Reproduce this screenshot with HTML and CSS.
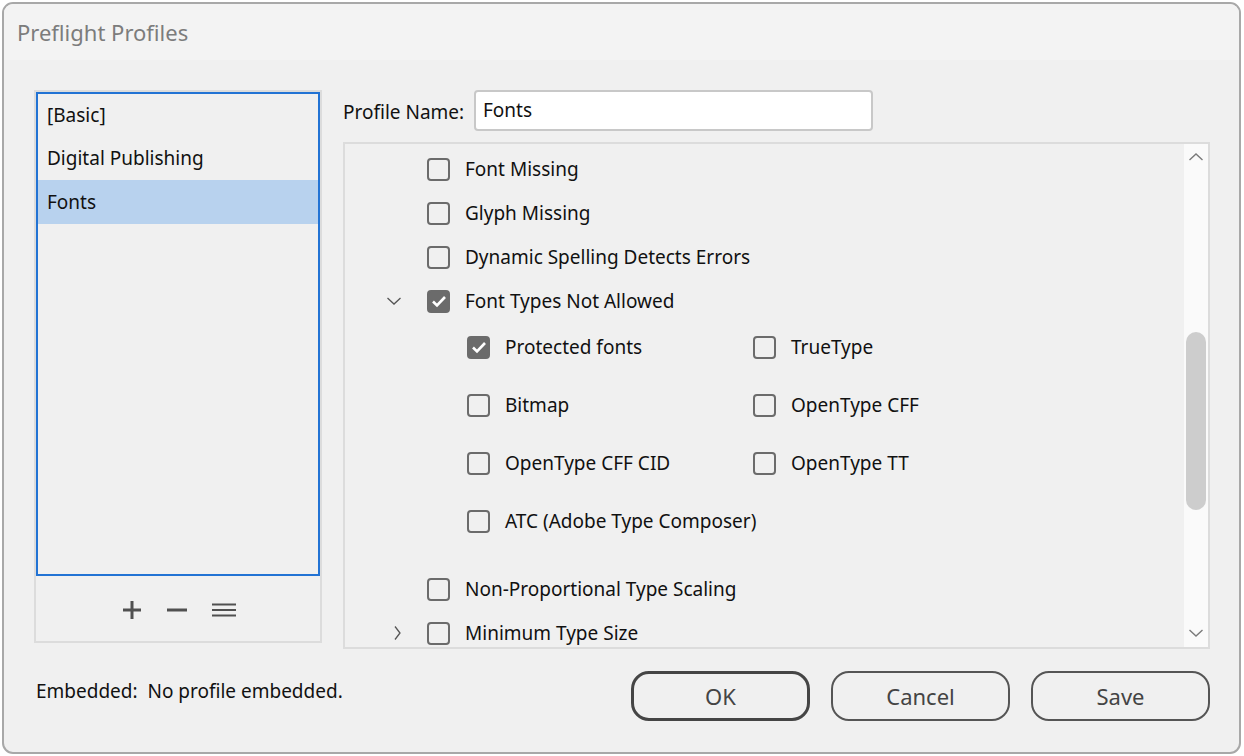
FILE: index.html
```html
<!DOCTYPE html>
<html>
<head>
<meta charset="utf-8">
<link rel="stylesheet" href="styles.css">
</head>
<body>
<div class="window">
  <div class="titlebar">Preflight Profiles</div>
  <div class="content">
    <div class="left">
      <div class="list">
        <div class="item">[Basic]</div>
        <div class="item">Digital Publishing</div>
        <div class="item selected">Fonts</div>
      </div>
      <div class="toolbar">
        <svg class="tool" width="22" height="22" viewBox="0 0 22 22"><path d="M11 2v18M2 11h18" stroke="#505050" stroke-width="3"/></svg>
        <svg class="tool" width="22" height="22" viewBox="0 0 22 22"><path d="M1 11h20" stroke="#505050" stroke-width="3"/></svg>
        <svg class="tool" width="26" height="22" viewBox="0 0 26 22"><path d="M1 5.5h24M1 11h24M1 16.5h24" stroke="#505050" stroke-width="1.8"/></svg>
      </div>
    </div>
    <div class="right">
      <div class="namerow">
        <span class="namelabel">Profile Name:</span>
        <div class="nameinput">Fonts</div>
      </div>
      <div class="panel">
        <div class="tree">
          <div class="row"><span class="twisty"></span><span class="cb"></span><span class="lbl">Font Missing</span></div>
          <div class="row"><span class="twisty"></span><span class="cb"></span><span class="lbl">Glyph Missing</span></div>
          <div class="row"><span class="twisty"></span><span class="cb"></span><span class="lbl">Dynamic Spelling Detects Errors</span></div>
          <div class="row"><span class="twisty"><svg width="16" height="10" viewBox="0 0 16 10"><path d="M1.5 2l6.5 6 6.5-6" fill="none" stroke="#555" stroke-width="1.3"/></svg></span><span class="cb checked"><svg width="18" height="18" viewBox="0 0 18 18"><path d="M3 9.5l4 4L15 5" fill="none" stroke="#fff" stroke-width="2.6"/></svg></span><span class="lbl">Font Types Not Allowed</span></div>
          <div class="subgrid">
            <div class="sub"><span class="cb checked"><svg width="18" height="18" viewBox="0 0 18 18"><path d="M3 9.5l4 4L15 5" fill="none" stroke="#fff" stroke-width="2.6"/></svg></span><span class="lbl">Protected fonts</span></div>
            <div class="sub"><span class="cb"></span><span class="lbl">TrueType</span></div>
            <div class="sub"><span class="cb"></span><span class="lbl">Bitmap</span></div>
            <div class="sub"><span class="cb"></span><span class="lbl">OpenType CFF</span></div>
            <div class="sub"><span class="cb"></span><span class="lbl">OpenType CFF CID</span></div>
            <div class="sub"><span class="cb"></span><span class="lbl">OpenType TT</span></div>
            <div class="sub"><span class="cb"></span><span class="lbl">ATC (Adobe Type Composer)</span></div>
          </div>
          <div class="row gap"><span class="twisty"></span><span class="cb"></span><span class="lbl">Non-Proportional Type Scaling</span></div>
          <div class="row"><span class="twisty"><svg width="10" height="16" viewBox="0 0 10 16"><path d="M3 1.5l5 6.5-5 6.5" fill="none" stroke="#555" stroke-width="1.3"/></svg></span><span class="cb"></span><span class="lbl">Minimum Type Size</span></div>
        </div>
        <div class="scrollbar">
          <svg class="arrow" width="16" height="10" viewBox="0 0 16 10"><path d="M1.5 8l6.5-6 6.5 6" fill="none" stroke="#7a7a7a" stroke-width="1.4"/></svg>
          <div class="track"><div class="thumb"></div></div>
          <svg class="arrow" width="16" height="10" viewBox="0 0 16 10"><path d="M1.5 2l6.5 6 6.5-6" fill="none" stroke="#7a7a7a" stroke-width="1.4"/></svg>
        </div>
      </div>
    </div>
  </div>
  <div class="footer">
    <div class="embedded">Embedded:&nbsp;&nbsp;No profile embedded.</div>
    <div class="buttons">
      <div class="btn default">OK</div>
      <div class="btn">Cancel</div>
      <div class="btn">Save</div>
    </div>
  </div>
</div>
</body>
</html>
```

FILE: styles.css
```css
html, body {
  margin: 0;
  padding: 0;
  background: #ffffff;
}
body {
  font-family: "Noto Sans", "Open Sans", sans-serif;
  font-size: 19px;
  color: #111;
}
.window {
  box-sizing: border-box;
  margin: 2px 0 0 2px;
  width: 1239px;
  height: 752px;
  border: 2px solid #a8a8a8;
  border-radius: 11px;
  background: #f0f0f0;
  overflow: hidden;
  display: flex;
  flex-direction: column;
}
.titlebar {
  height: 56px;
  flex: none;
  background: #f3f3f3;
  color: #7c7c7c;
  font-size: 22px;
  padding-left: 13px;
  line-height: 56px;
}
.content {
  display: flex;
  padding: 30px 0 0 30px;
  gap: 21px;
  height: 589px;
  flex: none;
  box-sizing: border-box;
}
.left {
  width: 288px;
  height: 553px;
  box-sizing: border-box;
  border: 2px solid #dcdcdc;
  display: flex;
  flex-direction: column;
  flex: none;
}
.list {
  height: 484px;
  box-sizing: border-box;
  border: 2px solid #2273d4;
  flex: none;
}
.item {
  height: 44px;
  line-height: 44px;
  padding-left: 9px;
}
.item:first-child {
  height: 42px;
  line-height: 42px;
}
.item.selected {
  background: #b8d2ee;
}
.toolbar {
  flex: 1;
  display: flex;
  align-items: center;
  justify-content: center;
  gap: 23px;
  padding-left: 2px;
  padding-top: 2px;
}
.right {
  width: 867px;
  display: flex;
  flex-direction: column;
  flex: none;
}
.namerow {
  display: flex;
  align-items: center;
  height: 41px;
  margin-bottom: 11px;
  flex: none;
}
.namelabel {
  width: 131px;
  padding-top: 2px;
}
.nameinput {
  box-sizing: border-box;
  width: 399px;
  height: 41px;
  border: 2px solid #c8c8c8;
  border-radius: 4px;
  background: #fff;
  padding-left: 7px;
  line-height: 36px;
}
.panel {
  box-sizing: border-box;
  height: 507px;
  flex: none;
  border: 2px solid #dcdcdc;
  display: flex;
  overflow: hidden;
}
.tree {
  flex: 1;
  padding-top: 3px;
  overflow: hidden;
}
.row {
  display: flex;
  align-items: center;
  height: 44px;
}
.row.gap {
  margin-top: 22px;
}
.twisty {
  width: 82px;
  display: flex;
  justify-content: flex-end;
  padding-right: 25px;
  box-sizing: border-box;
}
.cb {
  box-sizing: border-box;
  width: 23px;
  height: 23px;
  border: 2px solid #6b6b6b;
  border-radius: 4px;
  flex: none;
  display: flex;
  align-items: center;
  justify-content: center;
}
.cb.checked {
  background: #6b6b6b;
}
.lbl {
  margin-left: 15px;
  white-space: nowrap;
}
.subgrid {
  display: grid;
  grid-template-columns: 286px 300px;
  grid-auto-rows: 48px;
  row-gap: 10px;
  padding-left: 122px;
}
.sub {
  display: flex;
  align-items: center;
}
.scrollbar {
  width: 24px;
  background: #fafafa;
  display: flex;
  flex-direction: column;
  align-items: center;
}
.arrow {
  flex: none;
  margin: 8px 0;
}
.arrow:last-child {
  margin: 8px 0 9px;
}
.track {
  flex: 1;
  width: 100%;
  padding-top: 162px;
  box-sizing: border-box;
}
.thumb {
  width: 20px;
  height: 178px;
  margin: 0 auto;
  background: #cdcdcd;
  border-radius: 10px;
}
.footer {
  flex: 1;
  display: flex;
  align-items: flex-start;
  padding: 0 29px 0 32px;
  justify-content: space-between;
}
.embedded {
  margin-top: 29px;
}
.buttons {
  display: flex;
  gap: 21px;
  margin-top: 22px;
}
.btn {
  box-sizing: border-box;
  width: 179px;
  height: 50px;
  border: 2px solid #555;
  border-radius: 18px;
  display: flex;
  align-items: center;
  justify-content: center;
  font-size: 22px;
  color: #444;
}
.btn.default {
  border: 3px solid #454545;
}
```
